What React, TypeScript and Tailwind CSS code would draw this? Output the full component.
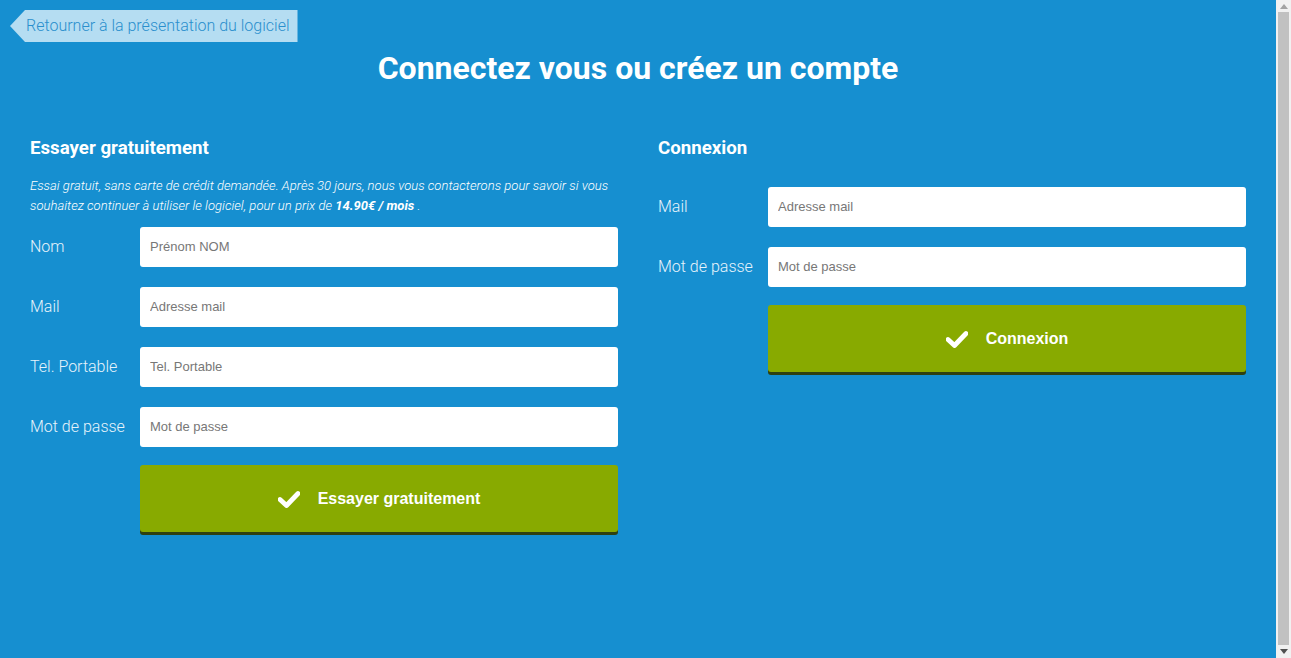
import React from "react";

const roboto = { fontFamily: "Roboto, 'Liberation Sans', sans-serif" };
const arial = { fontFamily: "'Liberation Sans', Arial, sans-serif" };

function Check() {
  return (
    <svg width="22" height="18" viewBox="0 0 22 18" className="shrink-0">
      <path d="M2 9.5 L8.5 15.5 L20 3.5" fill="none" stroke="white" strokeWidth="4.8" strokeLinecap="round" strokeLinejoin="round" />
    </svg>
  );
}

function Field({ label, placeholder, type = "text" }: { label: string; placeholder: string; type?: string }) {
  return (
    <div className="flex items-center">
      <label className="w-[110px] shrink-0 text-[16px] font-light text-[#e6f3fb]" style={roboto}>
        {label}
      </label>
      <input
        type={type}
        placeholder={placeholder}
        className="h-10 min-w-0 flex-1 rounded-[3px] bg-white px-[10px] pb-[1px] text-[13px] text-[#555] placeholder:text-[#777] outline-none"
        style={arial}
      />
    </div>
  );
}

function GreenButton({ label }: { label: string }) {
  return (
    <div className="flex">
      <div className="w-[110px] shrink-0" />
      <button className="mb-[3px] flex h-[67px] flex-1 items-center justify-center gap-[18px] rounded-[3px] bg-[#88aa00] text-[16px] font-bold text-white shadow-[0_3px_0_#2f4010]" style={arial}>
        <Check />
        <span>{label}</span>
      </button>
    </div>
  );
}

function Scrollbar() {
  return (
    <div className="flex h-[658px] w-[15px] shrink-0 flex-col items-center bg-[#f1f1f1]">
      <div className="flex h-[12px] items-center justify-center">
        <svg width="8" height="5" viewBox="0 0 8 5"><path d="M0 5 L4 0 L8 5 Z" fill="#a3a3a3" /></svg>
      </div>
      <div className="w-[11px] flex-1 bg-[#c1c1c1]" />
      <div className="flex h-[13px] items-center justify-center">
        <svg width="8" height="5" viewBox="0 0 8 5"><path d="M0 0 L8 0 L4 5 Z" fill="#505050" /></svg>
      </div>
    </div>
  );
}

export default function App() {
  return (
    <div className="flex h-[658px] w-full overflow-hidden">
      <div className="h-[658px] w-[1276px] shrink-0 bg-[#168fd0] text-white">
        <div className="px-[10px] pt-[10px]">
          <a
            className="inline-flex h-8 items-center bg-[#b5ddf2] pl-[16px] pr-[8px] text-[16px] font-light text-[#2a8fcd]"
            style={{ ...roboto, clipPath: "polygon(15px 0, 100% 0, 100% 100%, 15px 100%, 0 50%)" }}
          >
            Retourner à la présentation du logiciel
          </a>
        </div>
        <h1 className="mt-[6px] text-center text-[32px] font-bold leading-[40px]" style={roboto}>
          Connectez vous ou créez un compte
        </h1>
        <div className="mt-[48px] grid grid-cols-2 gap-10 px-[30px]">
          <div>
            <h2 className="text-[18.7px] font-bold leading-[24px]" style={roboto}>
              Essayer gratuitement
            </h2>
            <p className="mt-[16px] text-[13px] font-light italic leading-[20px] tracking-[0.03px]" style={roboto}>
              Essai gratuit, sans carte de crédit demandée. Après 30 jours, nous vous contacterons pour savoir si vous souhaitez continuer à utiliser le logiciel, pour un prix de <b className="font-bold">14.90€ / mois</b> .
            </p>
            <div className="mt-[11px] flex flex-col gap-5">
              <Field label="Nom" placeholder="Prénom NOM" />
              <Field label="Mail" placeholder="Adresse mail" />
              <Field label="Tel. Portable" placeholder="Tel. Portable" />
              <Field label="Mot de passe" placeholder="Mot de passe" type="password" />
            </div>
            <div className="mt-[18px]">
              <GreenButton label="Essayer gratuitement" />
            </div>
          </div>
          <div>
            <h2 className="text-[18.7px] font-bold leading-[24px]" style={roboto}>
              Connexion
            </h2>
            <div className="mt-[27px] flex flex-col gap-5">
              <Field label="Mail" placeholder="Adresse mail" />
              <Field label="Mot de passe" placeholder="Mot de passe" type="password" />
            </div>
            <div className="mt-[18px]">
              <GreenButton label="Connexion" />
            </div>
          </div>
        </div>
      </div>
      <Scrollbar />
    </div>
  );
}
